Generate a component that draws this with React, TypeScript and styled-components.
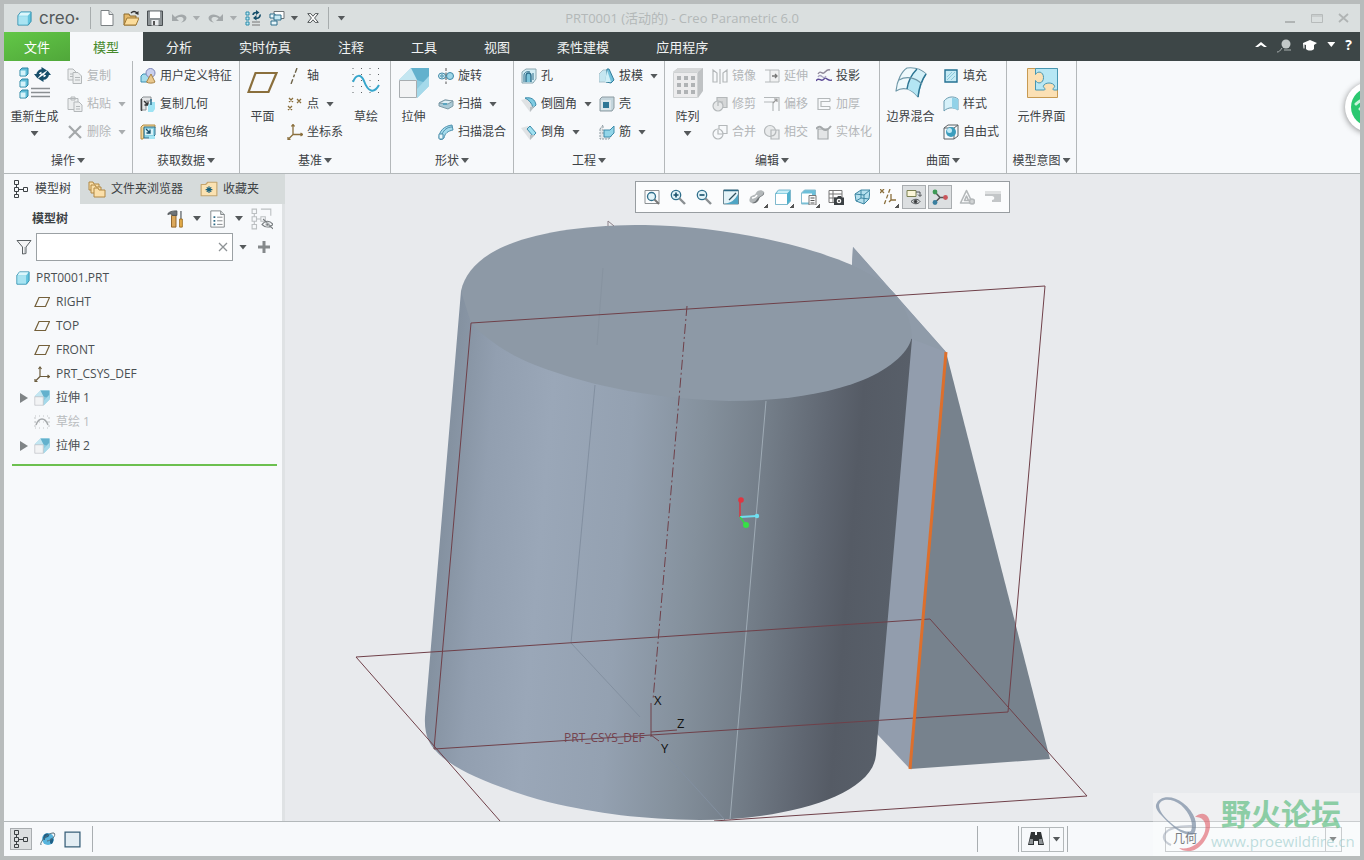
import React from "react";
import styled, { createGlobalStyle, css } from "styled-components";

const GlobalStyle = createGlobalStyle`
  *, *::before, *::after { box-sizing: border-box; }
  body { margin: 0; }
  body, button, input, select {
    font-family: "Open Sans", "Noto Sans CJK SC", sans-serif;
    font-size: 12px;
    line-height: 16px;
    color: #3d4245;
  }
  button {
    display: inline-flex;
    align-items: center;
    margin: 0;
    padding: 0;
    border: 0;
    background: none;
    white-space: nowrap;
  }
  svg { display: block; flex: none; }
`;

/* ---------- icons ---------- */

const INK = "#2f6f8c";
const BROWN = "#8a6f3c";
const GREY = "#b4b8ba";

const art: Record<string, React.ReactNode> = {
  cube: (
    <g strokeLinejoin="round">
      <path d="M1 5l3-4h11v10l-3 4H1z" fill="#62c4dd" stroke="#2c8cab" />
      <path d="M1.500 5.500h10v9h-10z" fill="#a9e4f2" />
      <path d="M4 1.500h10.500l-3 3.500H1.500z" fill="#dcf7fc" />
    </g>
  ),
  page: (
    <g fill="#fff" stroke="#7b8083">
      <path d="M2 .5h8l4 4v11H2z" />
      <path d="M10 .5v4h4" fill="#dfe3e4" />
    </g>
  ),
  open: (
    <g strokeLinejoin="round">
      <path d="M1 4h5l1 2h6v9H1z" fill="#e5b96b" stroke="#8c6a2c" />
      <path d="M1 15l3-7h12l-3 7z" fill="#fbdc9b" stroke="#a07a36" />
      <path d="M8 3c2-2 4-2 6 0" fill="none" stroke="#333" strokeWidth="1.500" />
      <path d="M12 3.500L15.500 5V1z" fill="#333" />
    </g>
  ),
  save: (
    <g>
      <path d="M.5 1h15v14.500H.5z" fill="#8d9396" stroke="#4a4f52" />
      <path d="M3 1.500h10v6.500H3z" fill="#fff" />
      <path d="M4.500 10h7v5.500h-7z" fill="#e9ecee" />
      <path d="M6 11h2v4H6z" fill="#555" />
    </g>
  ),
  undo: <path d="M1 4v7h7L5.500 8.500C8 6.500 12 6.500 12.500 9c.2 1.500-1 2.500-2.500 3.500 4-.5 6-3 5.300-5.500C14 3.500 8 3.500 4 7z" fill="#a3a8aa" />,
  redo: <path d="M15 4v7H8l2.500-2.500C8 6.500 4 6.500 3.500 9c-.2 1.500 1 2.500 2.500 3.500-4-.5-6-3-5.300-5.500C2 3.500 8 3.500 12 7z" fill="#a3a8aa" />,
  regenSmall: (
    <g fill="none">
      <path d="M1 2h3v3H1zM1 7h3v3H1zM1 12h3v3H1z" fill="#bdeaf5" stroke="#2c8cab" />
      <path d="M7 12h8M7 15h8" stroke="#777" />
      <path d="M8 5a3 3 0 0 1 3.500-2.500M15 4.500a3 3 0 0 1-4 3.500" stroke="#174f6b" strokeWidth="1.600" />
      <path d="M11 0l3.500 2.500L11 5zM11.500 5L8 8l3.500 2.500z" fill="#174f6b" />
    </g>
  ),
  windows: (
    <g fill="#fff" stroke="#6d7376">
      <path d="M5 1.500h10v7H5z" />
      <path d="M1 4h5v4H1z" fill="#e8f6fa" stroke={INK} />
      <path d="M5 5h7v5H5z" fill="#c8eaf4" stroke={INK} />
      <path d="M2 11h6v4H2z" fill="#e8f6fa" stroke={INK} />
    </g>
  ),
  closeWin: (
    <path d="M2 3h3.500L8 6l2.500-3H14l-4.200 5L14 13h-3.500L8 10l-2.500 3H2l4.200-5z" fill="#fff" stroke="#3c4144" strokeLinejoin="round" />
  ),
  regen: (
    <g fill="none" strokeLinejoin="round">
      {[0, 11, 22].map((y) => (
        <g key={y}>
          <path d={`M1 ${y + 3}l2-2h6v6l-2 2H1z`} fill="#5fbdd8" stroke="#2c86a3" />
          <path d={`M1.500 ${y + 3.500}h5v5h-5z`} fill="#d5f3fa" />
        </g>
      ))}
      <path d="M12 21.500h19M12 25.500h19M12 29.500h19" stroke="#8a8f92" strokeWidth="1.500" />
      <path d="M18.500 8a4.500 4.500 0 0 1 5-4.500M28.500 6a4.500 4.500 0 0 1-5 5.500" stroke="#174f6b" strokeWidth="2.600" />
      <path d="M22.500 0l5.500 3.500-5.500 3.500zM24.500 8l-5.500 3.500 5.500 3.500z" fill="#174f6b" />
      <path d="M15 7h7l-3.500 4.500zM25 8h7l-3.500-4.500z" fill="#174f6b" />
    </g>
  ),
  copy: (
    <g fill="#eceeef" stroke={GREY}>
      <path d="M1 1h5l3 3v8H1z" />
      <path d="M6 4.500h5l3.500 3.500v7.500H6z" />
      <path d="M8 9.500h5M8 12h5M3 6h3M3 8.500h3" />
    </g>
  ),
  paste: (
    <g fill="#eceeef" stroke={GREY}>
      <path d="M1 2.500h10v11H1zM4 1h4v3H4z" />
      <path d="M7 6h5l3 3v6.500H7z" />
      <path d="M9 10.500h4M9 13h4" />
    </g>
  ),
  cross: <path d="M2 2l12 12M14 2L2 14" stroke="#a4a8aa" strokeWidth="2.200" />,
  udf: (
    <g>
      <path d="M1 8l2-2h6v6l-2 2H1z" fill="#a3dcec" stroke="#3d8fb0" />
      <circle cx="10.500" cy="5" r="4.500" fill="#c9d0ee" stroke="#7c87b8" />
      <path d="M6.500 14l4.500-8 4 8c-1.500 1.500-7 1.500-8.500 0z" fill="#e9c88e" stroke="#a98446" />
    </g>
  ),
  copyGeom: (
    <g>
      <path d="M1 3l2-2h8v4H6v9H1z" fill="#e3e5e7" stroke="#8a8f92" />
      <path d="M1.500 3v12" stroke="#444" strokeWidth="1.500" />
      <path d="M4 5l4 4M8 5.500V9H4.500" stroke="#333" fill="none" strokeWidth="1.300" />
      <path d="M8 9l3-3h4v7l-2 3H8z" fill="#9ee3f3" />
      <path d="M11 3v6" stroke={INK} strokeWidth="1.500" />
    </g>
  ),
  shrink: (
    <g>
      <path d="M1 3l2-2h12v3H4v9l-1 2H1z" fill="#f3d79b" stroke="#b48d43" />
      <path d="M4 3h11v8l-3 3H4z" fill="#8ad1e3" stroke={INK} />
      <path d="M5 5h8v6H5z" fill="#d8f2f8" />
      <path d="M6 5l4 4M10 5.500V9H6.500" stroke="#174f6b" fill="none" strokeWidth="1.300" />
      <path d="M9 12h6v3H9z" fill="#a5e5f3" />
    </g>
  ),
  plane: <path d="M8.500 6h21l-8 19h-20z" fill="none" stroke={BROWN} strokeWidth="2.200" />,
  axis: <path d="M10 0L4 16" stroke="#6e6348" strokeWidth="1.400" strokeDasharray="5 2 3 2" />,
  points: <path d="M2 2l4 4M6 2L2 6M10 3l4 4M14 3l-4 4M1 10l4 4M5 10l-4 4" stroke={BROWN} strokeWidth="1.300" />,
  csys: (
    <g stroke={BROWN} strokeWidth="1.300" fill="none">
      <path d="M6 1v9.500h9.500M6 10.500L1.500 15" />
      <path d="M4.500 2.500L6 .5l1.500 2M13.500 9l2 1.500-2 1.500M1 13v2.500h2.500" />
    </g>
  ),
  sketch: (
    <g fill="none">
      <path d="M3 1v30M11.500 1v30M20 1v30M28.500 1v30" stroke="#5d6265" strokeDasharray="1 5" />
      <path d="M3 15C6 7 11 7 14 14c4 11 10 13 15 4" stroke="#36a6cc" strokeWidth="2" />
    </g>
  ),
  extrude: (
    <g strokeLinejoin="round">
      <path d="M1 13L13 1h18v18L19 31V13z" fill="#8ccbe0" />
      <path d="M13 1h18L19 13H1z" fill="#c3e6f1" />
      <path d="M13 1h18v16L19 13z" fill="#63b1cd" />
      <path d="M19 31l12-12V9L19 22z" fill="#a5d9ea" />
      <path d="M1.500 13.500h17v17h-17z" fill="#f2f3f4" stroke="#a8adb0" />
    </g>
  ),
  revolve: (
    <g fill="#d6f0f8" stroke="#3d87a5">
      <ellipse cx="4" cy="8" rx="3.500" ry="3" />
      <ellipse cx="12" cy="8" rx="3.500" ry="3.500" fill="#9fd6e8" />
      <ellipse cx="4" cy="8" rx="1.300" ry="1.200" />
      <path d="M8 0v16" stroke="#555" strokeDasharray="3 1.500" />
    </g>
  ),
  sweep: (
    <g strokeLinejoin="round">
      <path d="M1 7l6-3 8 1v5l-5 3-9-3z" fill="#a9c9d6" stroke="#7d9aa6" />
      <path d="M1 7l6-3 8 1-5 3z" fill="#e0eff5" stroke="#7d9aa6" />
      <path d="M5 7h4v2H5z" fill="#5aa4bf" />
    </g>
  ),
  sweptBlend: (
    <g strokeLinejoin="round">
      <path d="M1 14c0-7 5-12 13-13l1 5c-5 1-8 3-9 8l-3 2z" fill="#a4dbec" stroke="#4d90ad" />
      <path d="M1 10h4v5H1z" fill="#e9f8fc" stroke="#4d90ad" />
      <path d="M4 10c2-4 5-7 10-7" fill="none" stroke="#4d90ad" />
    </g>
  ),
  hole: (
    <g strokeLinejoin="round">
      <path d="M1 4l4-3h10v10l-3 4H1z" fill="#d5eef5" stroke="#8aa6b0" />
      <path d="M5 14V8c0-4 5-4 5 0v6" fill="#7cc5dc" stroke={INK} strokeWidth="1.400" />
      <path d="M3 14V7c0-3 4-4 6-3M12 5v7" fill="none" stroke={INK} />
    </g>
  ),
  round: (
    <g>
      <path d="M0 4l8-2 7 7-6 7z" fill="#dfe2e4" />
      <path d="M4 2c6-1 10 1 11 7l-3 3c-1-5-4-8-8-10z" fill="#7fcbe2" stroke="#3d8cab" />
      <path d="M9 16v-5l5-1z" fill="#b9bfc2" />
    </g>
  ),
  chamfer: (
    <g>
      <path d="M0 4l7-2 8 7-6 7z" fill="#dfe2e4" />
      <path d="M6 5l3-3 6 7-3 3z" fill="#9fe0f0" stroke="#3d8cab" />
      <path d="M9 16v-5h5z" fill="#b9bfc2" />
    </g>
  ),
  draft: (
    <g strokeLinejoin="round">
      <path d="M0 6l4-4h4v12H0z" fill="#c5e6f0" stroke="#a9c2cb" />
      <path d="M8 1l2 0 5 11-3 3-5-1z" fill="#73c0da" stroke="#337e9c" />
      <path d="M8 2l4 12H6z" fill="#d0eff7" />
    </g>
  ),
  shell: (
    <g>
      <path d="M1 3l2-2h12v11l-2 3H1z" fill="#c4d5dc" stroke="#8b9aa1" />
      <path d="M2 4h10v10H2z" fill="#dce6ea" />
      <path d="M4 6h6v6H4z" fill="#2f7695" />
    </g>
  ),
  rib: (
    <g strokeLinejoin="round">
      <path d="M1 5l3-4v9l9 1-3 4H1z" fill="#e3e6e8" stroke="#8b9aa1" strokeDasharray="2 1" />
      <path d="M5 6h6l4-4v7l-4 4H5z" fill="#92d5e8" stroke="#3d8cab" />
    </g>
  ),
  pattern: (
    <g>
      <path d="M1 5l5-4h25v23l-5 7V5z" fill="#bfc2c4" />
      <path d="M1 5l5-4h25l-5 4z" fill="#d6d8d9" />
      <path d="M1.500 5.500h24v25h-24z" fill="#ececed" stroke="#cfd2d3" />
      {[9, 16, 23].map((y) => (
        <path key={y} d={`M5 ${y}h4v4H5zM12 ${y}h4v4h-4zM19 ${y}h4v4h-4z`} fill="#b0b3b5" />
      ))}
    </g>
  ),
  mirror: (
    <g fill="none" stroke={GREY} strokeWidth="1.200">
      <path d="M1 2l4 3v9H1zM15 2l-4 3v9h4z" />
      <path d="M8 1v15" />
    </g>
  ),
  extend: (
    <g fill="#f0f1f2" stroke={GREY}>
      <path d="M1 2h5M1 14h5" fill="none" />
      <path d="M6 2h9v12H6z" />
      <path d="M8 8h5M11 6l2 2-2 2" stroke="#777" fill="none" strokeWidth="1.300" />
    </g>
  ),
  project: (
    <g fill="none" strokeWidth="1.400">
      <path d="M2 6c3-5 4 2 7-2 2-2 3-3 5-2" stroke="#8f8899" />
      <path d="M0 13c3-5 5 2 8-2 2-3 4 3 8 1" stroke="#5c4a96" />
      <path d="M2 9c3-5 5 4 8-1" stroke="#a9a4c0" />
    </g>
  ),
  trim: (
    <g fill="#e6e8e9" stroke={GREY} strokeWidth="1.200">
      <path d="M5 1.500h10v10H5z" fill="#d5d7d8" />
      <circle cx="6" cy="10" r="5" />
      <path d="M6 10V6h5" fill="none" />
    </g>
  ),
  offset: (
    <g fill="none" stroke={GREY} strokeWidth="1.200">
      <path d="M0 1.500h15V15M0 6h9v9" />
      <path d="M9 7l4-4M10 3h3v3" stroke="#999" />
    </g>
  ),
  thicken: <path d="M14 2.500H2v11h12M14 5.500H5v5h9M14 2.500v3M14 10.500v3" fill="none" stroke={GREY} strokeWidth="1.200" />,
  merge: (
    <g fill="none" stroke={GREY} strokeWidth="1.200">
      <path d="M7 5V1.500h8v8h-4" />
      <circle cx="6" cy="10" r="5" />
      <path d="M6 6v4h5" />
    </g>
  ),
  intersect: (
    <g fill="#e9ebec" stroke={GREY} strokeWidth="1.200">
      <circle cx="6" cy="7" r="5.500" />
      <path d="M7 6h8v9H7z" />
      <path d="M7 12c4 0 5-3 5-6" fill="none" />
    </g>
  ),
  solidify: (
    <g fill="none" stroke="#a5a9ab" strokeWidth="1.200">
      <path d="M2 15V5l10 0v10z" fill="#e3e5e6" />
      <path d="M0 5c3-4 5-2 7 0s5 1 8-3" strokeWidth="2" />
    </g>
  ),
  boundary: (
    <g strokeLinejoin="round" fill="none" stroke="#6f98a8" strokeWidth="1.200">
      <path d="M1 24C2 13 7 4 12 1c8-1 14 1 19 6-5 7-7 14-8 23-4-5-7-7-11-8-4-1-8 0-11 2z" fill="#eef9fc" />
      <path d="M17 11c4 1 7 3 10 6-2 4-3 8-4 13-4-5-7-7-11-8 1-4 3-8 5-11z" fill="#b3e5f3" stroke="none" />
      <path d="M22 2c3 1 6 3 9 5-3 3-4 6-5 9-3-3-5-4-9-5 1-3 3-6 5-9z" fill="#d3f0f8" stroke="none" />
      <path d="M22 2C16 8 13 15 12 22M31 7c-5 7-7 14-8 23" stroke="#2b7593" strokeWidth="1.500" />
      <path d="M4 13c7-4 16-3 23 4" />
    </g>
  ),
  fill: (
    <g>
      <path d="M2 2h12v12H2z" fill="#c5eaf4" stroke="#247193" strokeWidth="1.400" />
      <path d="M4 9l5-5M4 12l8-8M8 12l4-4" stroke="#8cc9dc" />
    </g>
  ),
  style: (
    <g strokeLinejoin="round">
      <path d="M1 5c4-5 10-5 14-2v11c-4-3-10-3-14 1z" fill="#d6f1f9" stroke="#6b9cb0" />
      <path d="M9 2c2 0 4 0 6 1v11c-2-1-4-2-6-2z" fill="#92d2e8" />
    </g>
  ),
  freestyle: (
    <g>
      <path d="M1 4l4-3h10v11l-4 3H1zM1 4h10v11M11 4l4-3" fill="none" stroke="#5b6164" />
      <circle cx="8" cy="8" r="5" fill="#3c9dbd" />
      <circle cx="6.500" cy="6.500" r="2.500" fill="#bfe9f5" />
    </g>
  ),
  interface: (
    <g strokeLinejoin="round">
      <path d="M1.500 1.500h30v29h-30z" fill="#fbe0b4" stroke="#c79a52" />
      <path
        d="M9.500 1.500v6c2-4 8-3 8 3s-6 7-8 3v9.500h9c2-2-2-2-1-4 1-4 10-4 11 0 1 2-3 2-1 4h4V1.500z"
        fill="#b7e7f4"
        stroke="#4796b1"
      />
    </g>
  ),
  treeNodes: (
    <path d="M2.500 .5h4v4h-4zM2.500 7.500h4v4h-4zM2.500 14.500h4v3h-4zM11.500 7.500h4v4h-4zM4.500 4.500v3M4.500 11.500v3M6.500 9.500h5" fill="none" stroke="#3c4144" />
  ),
  folders: (
    <g fill="#fbdfa9" stroke="#b08743" strokeLinejoin="round">
      <path d="M1 2h4l1 2h5v6H1z" />
      <path d="M3 5h4l1 2h5v6H3z" />
      <path d="M6 8h4l1 2h6v7H6z" />
    </g>
  ),
  favorites: (
    <g strokeLinejoin="round">
      <path d="M1 4h4l2-2h8v12H1z" fill="#fbe2b2" stroke="#c4a46c" />
      <path d="M8 5.500v6M5 8.500h6M6 6.500l4 4M10 6.500l-4 4" stroke="#17607c" />
    </g>
  ),
  hammer: (
    <g>
      <path d="M5 6h5v13H5z" fill="#dba85c" stroke="#8a5c20" />
      <path d="M1 4c2-2 4-3 10-3v5H6c-1-2-3-2-5-1z" fill="#6e7478" stroke="#4a4f52" />
      <path d="M15.500 1v9" stroke="#6e7478" strokeWidth="1.600" />
      <path d="M14 10h3v9h-3z" fill="#eab14d" stroke="#9a6a1e" />
    </g>
  ),
  listPage: (
    <g>
      <path d="M2 1h11l4 4v14H2z" fill="#fff" stroke="#7b8083" />
      <path d="M13 1v4h4" fill="#d5dadc" stroke="#7b8083" />
      <path d="M5 8h2M5 12h2M5 16h2" stroke="#2c6a86" strokeWidth="2" />
      <path d="M9 8h6M9 12h6M9 16h6" stroke="#7b8083" />
    </g>
  ),
  treeHidden: (
    <g fill="none" stroke="#bcc0c2">
      <path d="M1 1h4v4H1zM1 8h4v4H1zM1 15h4v4H1zM9 8h4v4H9zM3 5v3M3 12v3M5 10h4M9 1h9v6" />
      <path d="M10 15c3-4 7-4 10 0-3 3-7 3-10 0zM11 10l9 9" stroke="#777c7f" />
      <circle cx="15" cy="15" r="1.500" fill="#777c7f" />
    </g>
  ),
  funnel: (
    <g strokeLinejoin="round">
      <path d="M1 1.500h14L10 8v6.500L6.500 15V8z" fill="#f4f5f6" stroke="#5b6164" />
      <path d="M9 8v6.500" stroke="#9a9fa2" />
    </g>
  ),
  clear: <path d="M2 2l8 8M10 2l-8 8" stroke="#8d9295" strokeWidth="1.300" />,
  plus: <path d="M6 0v12M0 6h12" stroke="#85898b" strokeWidth="3" />,
  datum: <path d="M5 3.500h10.500l-4 9H1z" fill="none" stroke="#74603a" strokeWidth="1.200" />,
  csysTree: (
    <g stroke="#6b5c3d" strokeWidth="1.200" fill="none">
      <path d="M6 1v9.500h9.500M6 10.500L1.500 15" />
      <path d="M4.500 3L6 1l1.500 2M13.500 9l2 1.500-2 1.500M1 13v2.500h2.500" />
    </g>
  ),
  sketchOff: (
    <g fill="none">
      <path d="M1 2h14M1 8h14M1 14h14" stroke="#c3c6c8" strokeDasharray="1 3" />
      <path d="M1 3v11M15 3v11" stroke="#c3c6c8" strokeDasharray="2 2" />
      <path d="M2 11c3-8 9-8 12 0" stroke="#a5a9ab" strokeWidth="1.500" />
    </g>
  ),
  refit: (
    <g fill="none">
      <path d="M1 1.500h14v13H1z" stroke="#8b9093" />
      <circle cx="7.500" cy="7.500" r="4" fill="#e3f4f9" stroke={INK} strokeWidth="1.300" />
      <path d="M10.500 10.500L15 15" stroke="#777" strokeWidth="2" />
    </g>
  ),
  zoomIn: (
    <g fill="none">
      <circle cx="6" cy="6" r="4.700" fill="#e3f4f9" stroke={INK} strokeWidth="1.300" />
      <path d="M9.500 9.500L15 15" stroke="#8a8f92" strokeWidth="2.400" />
      <path d="M3.500 6h5M6 3.500v5" stroke="#174f6b" strokeWidth="1.600" />
    </g>
  ),
  zoomOut: (
    <g fill="none">
      <circle cx="6" cy="6" r="4.700" fill="#e3f4f9" stroke={INK} strokeWidth="1.300" />
      <path d="M9.500 9.500L15 15" stroke="#8a8f92" strokeWidth="2.400" />
      <path d="M3.500 6h5" stroke="#174f6b" strokeWidth="1.600" />
    </g>
  ),
  repaint: (
    <g>
      <path d="M.5 1h15v14H.5z" fill="#e4f3f8" stroke="#6d8894" />
      <path d="M15 5v10H1c7-1 11-4 14-10z" fill="#4fa5c4" />
      <path d="M1 1.500h14" stroke="#2c6a86" strokeWidth="1.500" />
      <path d="M6 11l7-7" stroke="#30515f" strokeWidth="1.300" />
    </g>
  ),
  shading: (
    <g>
      <path d="M1 9c0-3 5-2 6-5s6-4 8-1c1 4-4 4-5 7s-4 5-7 4-3-3-2-5z" fill="#b3b8ba" />
      <path d="M15 3c1 4-4 4-5 7s-4 5-7 4c4-1 4-3 6-5s5-2 6-6z" fill="#6e7376" />
      <path d="M3 9c2 0 4-1 5-3" stroke="#fff" strokeWidth="1.500" fill="none" />
    </g>
  ),
  display: (
    <g strokeLinejoin="round">
      <path d="M.5 4.500l3-3.500h12v11l-3 3.500H.5z" fill="#4fb0cd" stroke="#7fb9cd" />
      <path d="M1 5h11v10H1z" fill="#fff" />
      <path d="M3.500 1.500H15L12 4.500H1.500z" fill="#c8eef7" />
    </g>
  ),
  saved: (
    <g strokeLinejoin="round">
      <path d="M.5 4l3-3h11v11l-3 3H.5z" fill="#6cc0da" stroke="#86bccf" />
      <path d="M1 4.500h10v9H1z" fill="#fff" />
      <path d="M8 6.500h7V16H8z" fill="#fafafa" stroke="#777" />
      <path d="M9.500 9h4M9.500 11.500h4M9.500 14h4" stroke="#555" />
    </g>
  ),
  viewManager: (
    <g>
      <path d="M1 1.500h13v12H1zM1 5h13M1 9h13M5 1.500v12" fill="#fff" stroke="#777" />
      <path d="M6 8.500h3l1-1.500h3l1 1.500h2V16H6z" fill="#3c4144" />
      <circle cx="11" cy="12" r="2.300" fill="#fff" />
      <circle cx="11" cy="12" r="1" fill="#444" />
    </g>
  ),
  perspective: (
    <g fill="#b5e0ee" stroke="#3c86a3" strokeLinejoin="round">
      <path d="M1 5l6-4 9 0-1 9-5 5-8-3z" />
      <path d="M1 5l9 1 6-5M10 6v9M7 1v8l-5 3M7 9l8 1" fill="none" />
    </g>
  ),
  datumFilter: (
    <g stroke={BROWN} strokeWidth="1.300" fill="none">
      <path d="M0 0l4 4M4 0L0 4" />
      <path d="M10 0L4 16" strokeDasharray="4 2" />
      <path d="M11 5v6h5M11 11l-2 2" />
    </g>
  ),
  annotations: (
    <g fill="none" stroke="#4c5154">
      <path d="M1 1.500h9v6H1z" fill="#fbf6d9" stroke="#7a8052" />
      <path d="M10 3h4v4M12 5.500l2 2 2-2" />
      <path d="M5 12.500c3-3 7-3 9 0-2 3-6 3-9 0z" />
      <circle cx="9.500" cy="12.500" r="1.500" fill="#333" />
    </g>
  ),
  spin: (
    <g strokeWidth="1.500">
      <path d="M3 3l5 5.500-5 5M8 8.500h6" stroke="#555" fill="none" />
      <circle cx="3" cy="3" r="2.400" fill="#3f9a56" />
      <circle cx="3" cy="13.500" r="2.400" fill="#3a7fa0" />
      <circle cx="13.500" cy="8.500" r="2.400" fill="#c9555a" />
    </g>
  ),
  warning: (
    <g fill="none" stroke={GREY} strokeWidth="1.600" strokeLinejoin="round">
      <path d="M7.500 1.500l6 12.500h-12z" />
      <path d="M7.500 7l2 4.500h-4z" />
      <circle cx="13" cy="12.500" r="2.500" fill="#d0d3d4" />
    </g>
  ),
  section: (
    <g>
      <path d="M0 2h16v11H7v-2c3 0 3-4 0-4H0z" fill="#c3c6c8" />
      <path d="M0 2h16v3H0z" fill="#dfe1e2" />
    </g>
  ),
  globe: (
    <g fill="none">
      <circle cx="8" cy="8" r="6" fill="#57b4dd" />
      <path d="M4 4c3-3 6-1 5 1s-4 1-4 3-2 1-2-1M10 8c3-2 4 0 3 3s-3 2-3 0z" fill="#1f5f86" />
      <path d="M1 14c-2-3 8-13 13-12 3 3-4 8-7 8" stroke="#56707c" />
    </g>
  ),
  blankPane: <path d="M1 1h14v14H1z" fill="#e3edf3" stroke="#39607a" strokeWidth="1.200" />,
  binoculars: (
    <g fill="#2f3335">
      <path d="M3 1h4v3h2V1h4l3 13h-6v-4H6v4H0z" />
      <path d="M2 8h3v5H1zM11 8h3l1 5h-4z" fill="#8f9497" />
    </g>
  ),
  mini: <path d="M2 11h10" stroke="#b0b4b4" strokeWidth="2" />,
  maxi: <path d="M1.500 3.500h11v8h-11zM1.500 5h11" fill="none" stroke="#b7bbbb" />,
  shut: <path d="M2 3l9 8M11 3l-9 8" stroke="#b0b4b4" strokeWidth="1.800" />,
  up: <path d="M0 8l6-5 6 5H9L6 6 3 8z" fill="#fff" />,
  magnifier: (
    <g>
      <circle cx="9" cy="7" r="4.500" fill="#c2c8c8" />
      <path d="M0 15c2 0 3-1 5-4M7 13h7" stroke="#aab0b0" fill="none" />
    </g>
  ),
  cap: <path d="M0 5l7-3 7 3-3 2v4c-2 2-6 2-8 0V7L1.500 6.500v4h-1z" fill="#fff" />,
};

function Icon({ name, size = 16, box = 16 }: { name: string; size?: number; box?: number }) {
  return (
    <svg width={size} height={size} viewBox={`0 0 ${box} ${box}`} aria-hidden="true">
      {art[name]}
    </svg>
  );
}

const Caret = styled.span<{ $light?: boolean; $dim?: boolean }>`
  flex: none;
  width: 8px;
  height: 5px;
  background: ${(p) => (p.$light ? "#fff" : p.$dim ? "#a9adaf" : "#55595b")};
  clip-path: polygon(0 0, 100% 0, 50% 100%);
`;

/* ---------- window frame ---------- */

const Window = styled.div`
  position: relative;
  display: flex;
  flex-direction: column;
  min-height: 100vh;
  overflow: hidden;
  border: 4px solid #b8bcbc;
  background: #f7f9fb;
`;

const TitleBar = styled.header`
  display: grid;
  grid-template-columns: 1fr auto 1fr;
  align-items: center;
  height: 28px;
  background: #dadfdf;
`;

const QuickAccess = styled.div`
  display: flex;
  align-items: center;
  gap: 8px;
  padding-left: 13px;
`;

const Brand = styled.span`
  display: flex;
  align-items: center;
  gap: 7px;
  margin-right: 3px;
  font: 17px/28px Inter, sans-serif;
  color: #54595b;
`;

const Mark = styled.sup`
  margin-left: -7px;
  font-size: 8px;
  line-height: 8px;
`;

const Rule = styled.span`
  width: 1px;
  height: 22px;
  background: #a7acad;
`;

const Split = styled.div`
  display: flex;
  align-items: center;
  gap: 5px;
`;

const Title = styled.h1`
  margin: 0;
  font-size: 13px;
  font-weight: 400;
  line-height: 28px;
  color: #b3b8b8;
`;

const WindowControls = styled.div`
  display: flex;
  justify-content: flex-end;
  gap: 13px;
  padding-right: 9px;
`;

const TabBar = styled.nav`
  display: flex;
  height: 29px;
  background: #3d4647;
`;

const Tab = styled.button<{ $kind?: "file" | "active" }>`
  padding: 0 24px 0 23px;
  font-size: 13px;
  color: #f1f3f3;
  ${(p) =>
    p.$kind === "file" &&
    css`
      padding: 0 20px;
      background: linear-gradient(160deg, #62c747, #50a73a);
      color: #fff;
    `}
  ${(p) =>
    p.$kind === "active" &&
    css`
      background: #f7f9fb;
      color: #46892b;
    `}
`;

const TabTools = styled.div`
  display: flex;
  align-items: center;
  gap: 10px;
  margin-left: auto;
  padding: 0 8px 4px 0;
  color: #fff;
`;

const Help = styled.button`
  font-size: 14px;
  font-weight: 700;
  color: #fff;
`;

/* ---------- ribbon ---------- */

const Ribbon = styled.div`
  display: flex;
  height: 113px;
  border-bottom: 1px solid #b3b8ba;
  background: #f7f9fb;
`;

const Group = styled.section`
  display: flex;
  flex-direction: column;
  border-right: 1px solid #b4b8ba;
`;

const GroupBody = styled.div`
  display: flex;
  height: 85px;
  padding-top: 1px;
`;

const Caption = styled.button`
  justify-content: center;
  gap: 2px;
  height: 27px;
  padding-top: 2px;
`;

const Column = styled.div<{ $width: number }>`
  display: flex;
  flex-direction: column;
  width: ${(p) => p.$width}px;
  padding-left: 2px;
`;

const Tool = styled.button`
  gap: 4px;
  height: 28px;
  &:disabled { color: #b3b6b8; }
  ${Caret} { margin-left: 3px; }
`;

const BigTool = styled.button<{ $width: number }>`
  flex-direction: column;
  width: ${(p) => p.$width}px;
  padding-top: 5px;
  gap: 10px;
  ${Caret} { margin-top: -4px; }
`;

type ToolDef = [icon: string, label: string, caret?: boolean, off?: boolean];
type Part = { big: string; label: string; width: number; caret?: boolean } | { tools: ToolDef[]; width: number };

const groups: { name: string; parts: Part[] }[] = [
  {
    name: "操作",
    parts: [
      { big: "regen", label: "重新生成", width: 61, caret: true },
      { width: 67, tools: [["copy", "复制", false, true], ["paste", "粘贴", true, true], ["cross", "删除", true, true]] },
    ],
  },
  {
    name: "获取数据",
    parts: [{ width: 106, tools: [["udf", "用户定义特征"], ["copyGeom", "复制几何"], ["shrink", "收缩包络"]] }],
  },
  {
    name: "基准",
    parts: [
      { big: "plane", label: "平面", width: 45 },
      { width: 57, tools: [["axis", "轴"], ["points", "点", true], ["csys", "坐标系"]] },
      { big: "sketch", label: "草绘", width: 48 },
    ],
  },
  {
    name: "形状",
    parts: [
      { big: "extrude", label: "拉伸", width: 45 },
      { width: 77, tools: [["revolve", "旋转"], ["sweep", "扫描", true], ["sweptBlend", "扫描混合"]] },
    ],
  },
  {
    name: "工程",
    parts: [
      { width: 78, tools: [["hole", "孔"], ["round", "倒圆角", true], ["chamfer", "倒角", true]] },
      { width: 67, tools: [["draft", "拔模", true], ["shell", "壳"], ["rib", "筋", true]] },
    ],
  },
  {
    name: "编辑",
    parts: [
      { big: "pattern", label: "阵列", width: 45, caret: true },
      { width: 52, tools: [["mirror", "镜像", false, true], ["trim", "修剪", false, true], ["merge", "合并", false, true]] },
      { width: 52, tools: [["extend", "延伸", false, true], ["offset", "偏移", false, true], ["intersect", "相交", false, true]] },
      { width: 65, tools: [["project", "投影"], ["thicken", "加厚", false, true], ["solidify", "实体化", false, true]] },
    ],
  },
  {
    name: "曲面",
    parts: [
      { big: "boundary", label: "边界混合", width: 61 },
      { width: 65, tools: [["fill", "填充"], ["style", "样式"], ["freestyle", "自由式"]] },
    ],
  },
  { name: "模型意图", parts: [{ big: "interface", label: "元件界面", width: 69 }] },
];

/* Groups that open with a column of small tools keep a wider left margin. */
const Indent = styled.div<{ $on: boolean }>`
  display: flex;
  padding-left: ${(p) => (p.$on ? 5 : 0)}px;
`;

function RibbonGroup({ name, parts }: { name: string; parts: Part[] }) {
  const single = parts.length === 1;
  return (
    <Group aria-label={name}>
      <GroupBody>
        <Indent $on={"tools" in parts[0]}>
          {parts.map((part, i) =>
            "big" in part ? (
              <BigTool key={i} $width={part.width}>
                <Icon name={part.big} size={32} box={32} />
                {part.label}
                {part.caret && <Caret />}
              </BigTool>
            ) : (
              <Column key={i} $width={single ? part.width - 5 : part.width}>
                {part.tools.map(([icon, label, caret, off]) => (
                  <Tool key={label} disabled={off}>
                    <Icon name={icon} />
                    {label}
                    {caret && <Caret $dim={off} />}
                  </Tool>
                ))}
              </Column>
            ),
          )}
        </Indent>
      </GroupBody>
      <Caption>
        {name}
        <Caret />
      </Caption>
    </Group>
  );
}

/* ---------- model tree ---------- */

const Main = styled.main`
  display: flex;
  flex: 1;
  min-height: 0;
`;

const Sidebar = styled.aside`
  display: flex;
  flex-direction: column;
  flex: none;
  width: 281px;
  background: #dfe2e4;
`;

const SideTabs = styled.div`
  display: flex;
  height: 30px;
  background: #d6dbdb;
`;

const SideTab = styled.button<{ $active?: boolean }>`
  gap: 5px;
  padding: 0 9px 0 8px;
  background: ${(p) => (p.$active ? "#f7f9fb" : "transparent")};
`;

const Panel = styled.div`
  flex: 1;
  margin-right: 3px;
  background: #f7f9fb;
`;

const PanelHead = styled.div`
  display: flex;
  align-items: center;
  gap: 8px;
  height: 29px;
  padding: 0 9px 0 28px;
`;

const PanelTitle = styled.h2`
  flex: 1;
  margin: 0;
  font-size: 12px;
  font-weight: 700;
`;

const FilterRow = styled.div`
  display: flex;
  align-items: center;
  gap: 4px;
  padding: 0 12px;
`;

const FilterBox = styled.label`
  display: flex;
  align-items: center;
  width: 198px;
  height: 28px;
  padding: 0 3px;
  border: 1px solid #9ba1a4;
  background: #fff;
`;

const FilterInput = styled.input`
  flex: 1;
  min-width: 0;
  border: 0;
  outline: 0;
  background: none;
`;

const FilterMenu = styled.button`
  margin: 0 7px 0 2px;
`;

const Tree = styled.ul`
  margin: 5px 5px 0 8px;
  padding: 0 0 6px;
  border-bottom: 2px solid #6cc04f;
  list-style: none;
`;

const Node = styled.li<{ $level: number; $off?: boolean }>`
  display: flex;
  align-items: center;
  gap: 6px;
  height: 24px;
  padding-left: ${(p) => (p.$level ? 22 : 4)}px;
  color: ${(p) => (p.$off ? "#b9bcbe" : "#4a4f52")};
`;

const Expander = styled.button`
  width: 8px;
  height: 10px;
  margin: 0 0 0 -14px;
  background: #7f8486;
  clip-path: polygon(0 0, 100% 50%, 0 100%);
`;

const nodes = [
  { icon: "cube", label: "PRT0001.PRT", level: 0 },
  { icon: "datum", label: "RIGHT", level: 1 },
  { icon: "datum", label: "TOP", level: 1 },
  { icon: "datum", label: "FRONT", level: 1 },
  { icon: "csysTree", label: "PRT_CSYS_DEF", level: 1 },
  { icon: "extrude", label: "拉伸 1", level: 1, open: true },
  { icon: "sketchOff", label: "草绘 1", level: 1, off: true },
  { icon: "extrude", label: "拉伸 2", level: 1, open: true },
];

/* ---------- graphics area ---------- */

const Viewport = styled.div`
  position: relative;
  flex: 1;
  min-width: 0;
  background: #e8eaed;
`;

const Drawing = styled.svg`
  position: absolute;
  inset: 0;
  width: 100%;
  height: 100%;
`;

const ViewBar = styled.div`
  position: absolute;
  inset: 7px 0 auto;
  display: flex;
  align-items: center;
  justify-content: space-between;
  width: 375px;
  height: 32px;
  margin: 0 auto;
  padding: 0 4px;
  border: 1px solid #989da1;
  background: #fbfcfd;
`;

const ViewButton = styled.button<{ $pressed?: boolean; $menu?: boolean }>`
  justify-content: center;
  width: 24px;
  height: 24px;
  border: 1px solid ${(p) => (p.$pressed ? "#a9adb0" : "transparent")};
  background: ${(p) => (p.$pressed ? "#dcdfe1" : "none")};
  ${(p) =>
    p.$menu &&
    css`
      background: linear-gradient(135deg, transparent 50%, #555 50%) right bottom / 4px 4px no-repeat;
    `}
`;

const viewTools: [icon: string, label: string, state?: string][] = [
  ["refit", "重新调整"],
  ["zoomIn", "放大"],
  ["zoomOut", "缩小"],
  ["repaint", "重画"],
  ["shading", "渲染", "menu"],
  ["display", "显示样式", "menu"],
  ["saved", "已保存方向", "menu"],
  ["viewManager", "视图管理器"],
  ["perspective", "透视图"],
  ["datumFilter", "基准显示", "menu"],
  ["annotations", "注释显示", "pressed"],
  ["spin", "旋转中心", "pressed"],
  ["warning", "模拟"],
  ["section", "截面"],
];

function Scene() {
  return (
    <Drawing viewBox="285 174 1075 647" preserveAspectRatio="xMidYMid slice" role="img" aria-label="PRT0001">
      <defs>
        <linearGradient id="barrel" gradientUnits="userSpaceOnUse" x1="443" y1="500" x2="897" y2="538">
          <stop offset="0" stopColor="#8491a0" />
          <stop offset="0.090" stopColor="#929fb0" />
          <stop offset="0.220" stopColor="#9aa7b8" />
          <stop offset="0.400" stopColor="#94a1b1" />
          <stop offset="0.560" stopColor="#84909c" />
          <stop offset="0.700" stopColor="#737d88" />
          <stop offset="0.830" stopColor="#5f6671" />
          <stop offset="0.900" stopColor="#555b65" />
          <stop offset="1" stopColor="#585f69" />
        </linearGradient>
      </defs>
      <path d="M853 247L946 352L910 769L878 735L840 690L852 265z" fill="#929dad" />
      <path d="M946 352L1050 759L910 769z" fill="#77828d" />
      <path
        d="M461 291L425 717C424 735 430 745 436 751C452 770 500 789 548 802C600 814 640 819 700 820C780 820 872 798 876 755L912 339L690 240z"
        fill="url(#barrel)"
      />
      <path
        d="M461 291C465 272 480 257 505 246C540 231 590 225 645 225C720 226 800 243 852 265C880 277 912 300 912 335C911 350 892 368 863 380C825 395 780 401 729 401C660 399 595 388 535 365C505 353 484 337 471 323z"
        fill="#8d99a6"
      />
      <path d="M852 265C880 277 912 302 912 339L946 352L853 247z" fill="#8f9ba9" />
      <path d="M608 226l0-5 6 5" fill="none" stroke="#8b8088" />
      <g fill="none" strokeWidth="1">
        <path d="M603 268L597 345" stroke="#8793a0" />
        <path d="M595 385L571 643" stroke="#828fa0" />
        <path d="M571 643L640 717M668 757L725 820" stroke="#8390a0" />
        <path d="M766 401L730 820" stroke="#9fabb5" />
      </g>
      <g fill="none" stroke="#6f4049" strokeWidth="1">
        <path d="M471 323L1045 286L1008 712L434 749z" />
        <path d="M500 821L356 657L930 619L1087 796L714 821" />
        <path d="M687 306L653 700" strokeDasharray="10 3 2 3" />
        <path d="M651 737V703M651 732L677 730M651 735L659 741" />
      </g>
      <path d="M946 352L910 769" stroke="#dd6f2c" strokeWidth="3" />
      <path d="M740 517V501" stroke="#d8363f" strokeWidth="1.500" />
      <path d="M740 517L757 516" stroke="#6fdff0" strokeWidth="2" />
      <path d="M740 517L746 525" stroke="#35d545" strokeWidth="1.500" />
      <circle cx="741" cy="500" r="2.800" fill="#e03540" />
      <circle cx="757" cy="516" r="2.200" fill="#6fdff0" />
      <circle cx="746" cy="525" r="3" fill="#37e046" />
      <g fontFamily="Open Sans, sans-serif" fontSize="13">
        <text x="564" y="742" fontSize="12" fill="#75434f">PRT_CSYS_DEF</text>
        <text x="654" y="705" fill="#111">X</text>
        <text x="677" y="728" fill="#111">Z</text>
        <text x="661" y="753" fill="#111">Y</text>
      </g>
    </Drawing>
  );
}

/* ---------- status bar ---------- */

const StatusBar = styled.footer`
  display: flex;
  align-items: center;
  height: 35px;
  padding: 0 18px 0 6px;
  border-top: 1px solid #b3b8ba;
  background: #f7f9fb;
`;

const StatusTools = styled.div`
  display: flex;
  align-items: center;
  gap: 8px;
  flex: 1;
`;

const Toggle = styled.button<{ $pressed?: boolean }>`
  ${(p) =>
    p.$pressed &&
    css`
      padding: 1px;
      border: 1px solid #a9adb0;
      background: #dcdfe1;
    `}
`;

const StatusRule = styled.span<{ $gap: number }>`
  width: 1px;
  height: 26px;
  margin: 0 ${(p) => p.$gap}px 0 3px;
  background: #a9aeb1;
`;

const Find = styled.div`
  display: flex;
  height: 25px;
  border: 1px solid #b3b8ba;
`;

const FindButton = styled.button`
  justify-content: center;
  width: 27px;
`;

const FindMenu = styled.button`
  justify-content: center;
  width: 14px;
  border-left: 1px solid #b3b8ba;
`;

const Picker = styled.div`
  display: grid;
  grid-template-columns: 1fr 16px;
  align-items: center;
  justify-items: center;
  width: 177px;
  height: 25px;
  border: 1px solid #b3b8ba;
`;

const PickerSelect = styled.select`
  grid-area: 1 / 1 / 2 / 3;
  width: 100%;
  height: 23px;
  padding: 0 7px;
  border: 0;
  appearance: none;
  background: linear-gradient(#b3b8ba, #b3b8ba) right 15px top / 1px 100% no-repeat;
`;

const PickerCaret = styled(Caret)`
  grid-area: 1 / 2;
  pointer-events: none;
`;

/* ---------- overlays ---------- */

const Watermark = styled.div`
  position: absolute;
  right: 0;
  bottom: 0;
  display: flex;
  width: 207px;
  height: 63px;
  background: rgba(255, 255, 255, 0.3);
  pointer-events: none;
`;

const WatermarkText = styled.div`
  display: flex;
  flex-direction: column;
  gap: 1px;
`;

const WatermarkName = styled.span`
  padding-left: 10px;
  font: 700 30px/38px "Noto Sans CJK SC", sans-serif;
  color: rgba(95, 190, 130, 0.7);
`;

const WatermarkUrl = styled.span`
  font: 15px/18px "Open Sans", sans-serif;
  color: rgba(150, 200, 200, 0.6);
`;

const FloatBadge = styled.button`
  position: absolute;
  top: 78px;
  right: -35px;
  justify-content: flex-start;
  width: 50px;
  height: 50px;
  padding-left: 6px;
  border-radius: 50%;
  background: #fff;
  box-shadow: 0 1px 6px rgba(0, 0, 0, 0.45);
`;

export default function App() {
  return (
    <>
      <GlobalStyle />
      <Window>
        <TitleBar>
          <QuickAccess>
            <Brand>
              <Icon name="cube" size={15} />
              creo<Mark>•</Mark>
            </Brand>
            <Rule />
            <button aria-label="新建"><Icon name="page" /></button>
            <button aria-label="打开"><Icon name="open" /></button>
            <button aria-label="保存"><Icon name="save" /></button>
            <Split>
              <button aria-label="撤消"><Icon name="undo" /></button>
              <Caret $dim />
            </Split>
            <Split>
              <button aria-label="重做"><Icon name="redo" /></button>
              <Caret $dim />
            </Split>
            <button aria-label="重新生成"><Icon name="regenSmall" /></button>
            <Split>
              <button aria-label="窗口"><Icon name="windows" /></button>
              <Caret />
            </Split>
            <button aria-label="关闭窗口"><Icon name="closeWin" size={14} /></button>
            <Rule />
            <button aria-label="自定义"><Caret /></button>
          </QuickAccess>
          <Title>PRT0001 (活动的) - Creo Parametric 6.0</Title>
          <WindowControls>
            <button aria-label="最小化"><Icon name="mini" size={14} box={14} /></button>
            <button aria-label="最大化"><Icon name="maxi" size={14} box={14} /></button>
            <button aria-label="关闭"><Icon name="shut" size={14} box={14} /></button>
          </WindowControls>
        </TitleBar>

        <TabBar>
          <Tab $kind="file">文件</Tab>
          <Tab $kind="active">模型</Tab>
          {["分析", "实时仿真", "注释", "工具", "视图", "柔性建模", "应用程序"].map((t) => (
            <Tab key={t}>{t}</Tab>
          ))}
          <TabTools>
            <button aria-label="最小化功能区"><Icon name="up" size={12} box={12} /></button>
            <button aria-label="搜索"><Icon name="magnifier" /></button>
            <button aria-label="学习"><Icon name="cap" size={14} box={14} /></button>
            <Caret $light />
            <Help>?</Help>
          </TabTools>
        </TabBar>

        <Ribbon>
          {groups.map((g) => (
            <RibbonGroup key={g.name} {...g} />
          ))}
        </Ribbon>

        <Main>
          <Sidebar>
            <SideTabs>
              <SideTab $active>
                <Icon name="treeNodes" size={18} box={18} />
                模型树
              </SideTab>
              <SideTab>
                <Icon name="folders" size={18} box={18} />
                文件夹浏览器
              </SideTab>
              <SideTab>
                <Icon name="favorites" size={18} />
                收藏夹
              </SideTab>
            </SideTabs>
            <Panel>
              <PanelHead>
                <PanelTitle>模型树</PanelTitle>
                <button aria-label="设置"><Icon name="hammer" size={18} box={20} /></button>
                <Caret />
                <button aria-label="显示"><Icon name="listPage" size={18} box={20} /></button>
                <Caret />
                <button aria-label="隐藏树" disabled><Icon name="treeHidden" size={22} box={20} /></button>
              </PanelHead>
              <FilterRow>
                <Icon name="funnel" />
                <FilterBox>
                  <FilterInput type="text" aria-label="过滤" />
                  <button aria-label="清除"><Icon name="clear" size={12} box={12} /></button>
                </FilterBox>
                <FilterMenu aria-label="过滤选项"><Caret /></FilterMenu>
                <button aria-label="添加"><Icon name="plus" size={12} box={12} /></button>
              </FilterRow>
              <Tree>
                {nodes.map((n) => (
                  <Node key={n.label} $level={n.level} $off={n.off}>
                    {n.open && <Expander aria-label={"展开 " + n.label} />}
                    <Icon name={n.icon} size={n.level ? 16 : 14} box={n.icon === "extrude" ? 32 : 16} />
                    {n.label}
                  </Node>
                ))}
              </Tree>
            </Panel>
          </Sidebar>
          <Viewport>
            <Scene />
            <ViewBar role="toolbar" aria-label="图形工具栏">
              {viewTools.map(([icon, label, state]) => (
                <ViewButton key={icon} aria-label={label} $pressed={state === "pressed"} $menu={state === "menu"}>
                  <Icon name={icon} />
                </ViewButton>
              ))}
            </ViewBar>
          </Viewport>
        </Main>

        <StatusBar>
          <StatusTools>
            <Toggle $pressed aria-label="导航器"><Icon name="treeNodes" size={18} box={18} /></Toggle>
            <Toggle aria-label="浏览器"><Icon name="globe" /></Toggle>
            <Toggle aria-label="全屏"><Icon name="blankPane" size={17} /></Toggle>
            <StatusRule $gap={0} />
          </StatusTools>
          <StatusRule $gap={37} />
          <StatusRule $gap={2} />
          <Find>
            <FindButton aria-label="查找"><Icon name="binoculars" /></FindButton>
            <FindMenu aria-label="查找选项"><Caret /></FindMenu>
          </Find>
          <StatusRule $gap={97} />
          <Picker>
            <PickerSelect aria-label="选择过滤器" defaultValue="几何">
              <option>几何</option>
            </PickerSelect>
            <PickerCaret />
          </Picker>
        </StatusBar>

        <Watermark>
          <svg width="58" height="63" viewBox="0 0 58 63" fill="none" aria-hidden="true">
            <path fillRule="evenodd" d="M3 12C6 2 20 2 30 10c12 9 16 22 11 31-5 3-16-2-25-11C8 22 2 17 3 12zM6 12c0 6 5 12 12 18 8 7 16 10 20 8 3-7-1-18-10-26C19 5 8 5 6 12z" fill="rgba(110,130,155,.65)" />
            <path d="M18 52C4 46 10 32 40 33" stroke="rgba(150,160,175,.5)" strokeWidth="2" />
            <path fillRule="evenodd" d="M42 24c8-7 16-2 15 10-2 13-12 25-22 24-4 0-7-1-9-3 10 2 20-3 25-14 4-9 0-18-9-17z" fill="rgba(222,90,100,.6)" />
          </svg>
          <WatermarkText>
            <WatermarkName>野火论坛</WatermarkName>
            <WatermarkUrl>www.proewildfire.cn</WatermarkUrl>
          </WatermarkText>
        </Watermark>

        <FloatBadge aria-label="Wi-Fi">
          <svg width="38" height="38" viewBox="0 0 38 38" fill="none" aria-hidden="true">
            <circle cx="19" cy="19" r="19" fill="#2bc870" />
            <path d="M5 16c7-7 20-8 28 0M9 21c5-5 15-5 20 0" stroke="#c9f5dc" strokeWidth="3" strokeLinecap="round" />
          </svg>
        </FloatBadge>
      </Window>
    </>
  );
}
